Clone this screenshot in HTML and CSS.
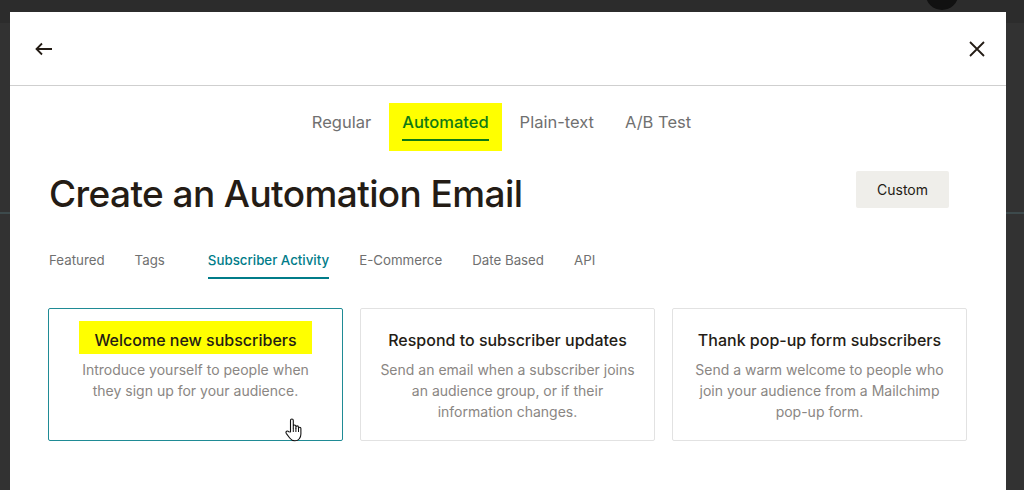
FILE: index.html
```html
<!DOCTYPE html>
<html lang="en">
<head>
    <meta charset="UTF-8">
    <meta name="viewport" content="width=device-width, initial-scale=1.0">
    <title>Create an Automation Email</title>
    <link rel="stylesheet" href="styles.css">
</head>
<body>

    <!-- dim page behind the modal -->
    <div class="page">
        <div class="avatar"></div>
    </div>

    <!-- Modal -->
    <div class="modal">
        <div class="modal-header">
            <button class="icon-btn" aria-label="Back">
                <svg width="18" height="14" viewBox="0 0 18 14"><path d="M17 7H2M7 1.5L1.5 7 7 12.5" fill="none" stroke="#241c15" stroke-width="1.8"/></svg>
            </button>
            <button class="icon-btn" aria-label="Close">
                <svg width="16" height="16" viewBox="0 0 16 16"><path d="M1 1l14 14M15 1L1 15" fill="none" stroke="#241c15" stroke-width="1.8"/></svg>
            </button>
        </div>

        <div class="modal-body">
            <div class="type-tabs">
                <a class="type-tab"><span>Regular</span></a>
                <a class="type-tab active"><span>Automated</span></a>
                <a class="type-tab"><span>Plain-text</span></a>
                <a class="type-tab"><span>A/B Test</span></a>
            </div>

            <div class="title-row">
                <h1>Create an Automation Email</h1>
                <button class="btn-custom">Custom</button>
            </div>

            <div class="cat-tabs">
                <a class="cat-tab">Featured</a>
                <a class="cat-tab">Tags</a>
                <a class="cat-tab active">Subscriber Activity</a>
                <a class="cat-tab">E-Commerce</a>
                <a class="cat-tab">Date Based</a>
                <a class="cat-tab">API</a>
            </div>

            <div class="cards">
                <div class="card selected">
                    <h3><span class="mark">Welcome new subscribers</span></h3>
                    <p>Introduce yourself to people when they sign up for your audience.</p>
                    <svg class="cursor" width="18" height="24" viewBox="0 0 18 24">
                        <path d="M5.5 14V2.6c0-1 .6-1.6 1.4-1.6s1.4.6 1.4 1.6V10V8.4c0-.9.6-1.4 1.3-1.4s1.3.5 1.3 1.4v2V9.2c0-.8.6-1.3 1.3-1.3s1.3.5 1.3 1.3v1.6-.4c0-.8.6-1.2 1.2-1.2s1.2.4 1.2 1.2v5.6c0 3.6-2.2 6.8-6 6.8-2.6 0-3.9-1-5.2-2.8L1.4 15.6c-.6-.9-.5-1.8.2-2.3.8-.5 1.6-.2 2.2.5z" fill="#fff" stroke="#111" stroke-width="1.1" stroke-linejoin="round"/>
                        <path d="M8.3 10v4M10.9 10.4v3.6M13.5 10.8v3.2" stroke="#111" stroke-width="1"/>
                    </svg>
                </div>
                <div class="card">
                    <h3><span class="mark plain">Respond to subscriber updates</span></h3>
                    <p>Send an email when a subscriber joins an audience group, or if their information changes.</p>
                </div>
                <div class="card">
                    <h3><span class="mark plain">Thank pop-up form subscribers</span></h3>
                    <p>Send a warm welcome to people who join your audience from a Mailchimp pop-up form.</p>
                </div>
            </div>
        </div>
    </div>

</body>
</html>
```

FILE: styles.css
```css
body {
    margin: 0;
    height: 490px;
    overflow: hidden;
    font-family: Inter, "Noto Sans", sans-serif;
    color: #241c15;
    background-color: #323232;
}

.page {
    height: 490px;
    border-top: 23px solid #2c2c2c;
    background: linear-gradient(#323232 189px, #3d4a4c 189px, #3d4a4c 191px, #323232 191px);
}
.avatar {
    position: absolute;
    left: 926px;
    top: -20px;
    width: 32px;
    height: 30px;
    border-radius: 50%;
    background-color: #111;
}

.modal {
    position: absolute;
    left: 10px;
    top: 12px;
    width: 996px;
    height: 500px;
    background-color: #fff;
}
.modal-header {
    height: 73px;
    border-bottom: 1px solid #cfcfcf;
    display: flex;
    align-items: center;
    justify-content: space-between;
    padding: 0 17px 0 21px;
}
.icon-btn {
    background: none;
    border: 0;
    padding: 4px;
    display: flex;
    cursor: pointer;
}

.modal-body {
    padding: 0 39px 0 38px;
}

/* email type tabs */
.type-tabs {
    display: flex;
    justify-content: center;
    gap: 5px;
    margin-top: 17px;
    padding-right: 12px;
}
.type-tab {
    padding: 9px 13px 10px;
    font-size: 16.5px;
    line-height: 20px;
    color: #707070;
}
.type-tab span {
    display: inline-block;
    padding-bottom: 7px;
    border-bottom: 2px solid transparent;
}
.type-tab.active {
    background-color: #ffff00;
    color: #0f7a14;
    font-weight: 500;
}
.type-tab.active span {
    border-bottom-color: #0f7a14;
}

.title-row {
    display: flex;
    justify-content: space-between;
    align-items: flex-start;
    margin-top: 20px;
}
h1 {
    margin: 0 0 0 1px;
    font-size: 37px;
    line-height: 46px;
    font-weight: 500;
    letter-spacing: -0.6px;
}
.btn-custom {
    width: 93px;
    height: 37px;
    margin-right: 18px;
    border: 0;
    border-radius: 2px;
    background-color: #efeeea;
    font-family: inherit;
    font-size: 14px;
    color: #241c15;
}

/* category tabs */
.cat-tabs {
    display: flex;
    gap: 30px;
    margin-top: 35px;
    padding-left: 1px;
}
.cat-tab {
    font-size: 13.3px;
    line-height: 16px;
    padding-bottom: 9px;
    color: #707070;
    border-bottom: 2px solid transparent;
}
.cat-tab.active {
    margin-left: 13px;
    color: #007c89;
    font-weight: 500;
    border-bottom-color: #007c89;
}

/* cards */
.cards {
    display: grid;
    grid-template-columns: repeat(3, 1fr);
    gap: 17px;
    margin-top: 29px;
}
.card {
    position: relative;
    height: 133px;
    box-sizing: border-box;
    padding: 12px 19px 0;
    border: 1px solid #e2e2e2;
    border-radius: 2px;
    text-align: center;
}
.card.selected {
    border-color: #1f8b95;
}
.card h3 {
    margin: 0;
    font-size: 16px;
    line-height: 19px;
    font-weight: 500;
    white-space: nowrap;
}
.mark {
    display: inline-block;
    padding: 10px 15px 4px;
    background-color: #ffff00;
}
.mark.plain {
    padding: 10px 0 4px;
    background: none;
}
.card p {
    margin: 5px 0 0;
    font-size: 14px;
    line-height: 21px;
    color: #8a8683;
}
.cursor {
    position: absolute;
    left: 236px;
    top: 109px;
}
```
